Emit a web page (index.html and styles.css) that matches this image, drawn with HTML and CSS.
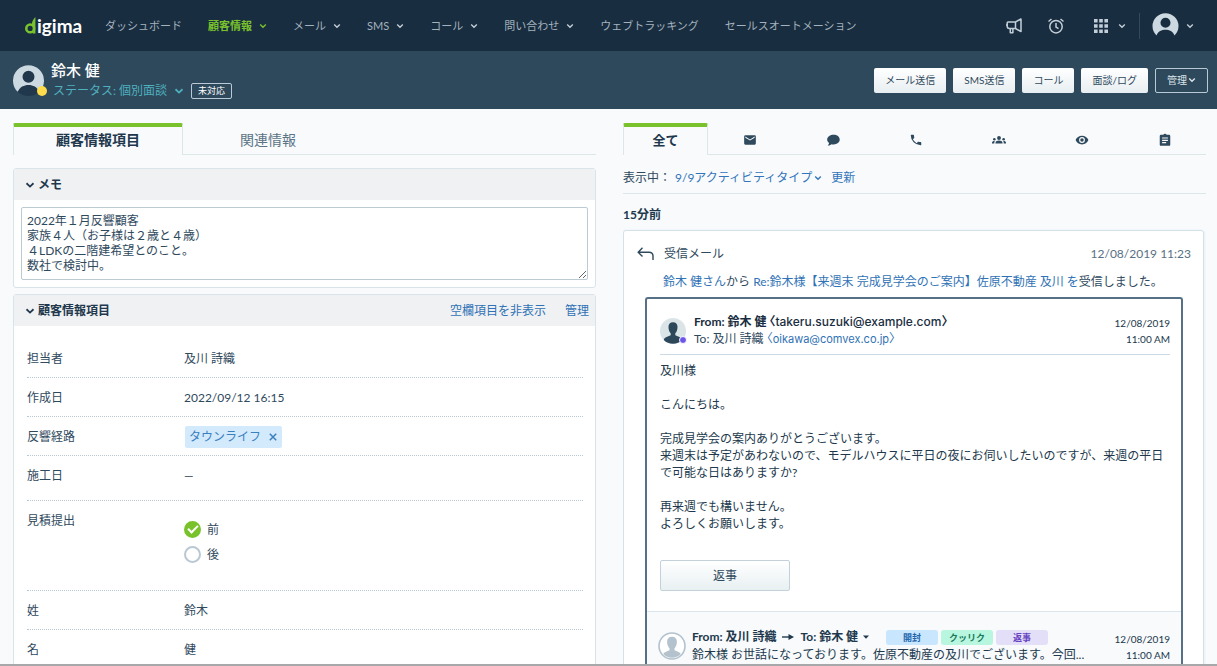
FILE: index.html
```html
<!DOCTYPE html>
<html lang="ja">
<head>
<meta charset="utf-8">
<meta name="viewport" content="width=device-width, initial-scale=1">
<title>鈴木 健 | digima</title>
<link rel="stylesheet" href="styles.css">
</head>
<body class="app">
<svg class="defs" aria-hidden="true">
  <symbol id="chev" viewBox="0 0 8 8"><path d="M1.2 2.6 4 5.3l2.8-2.7" fill="none" stroke="currentColor" stroke-width="1.4"/></symbol>
  <symbol id="person" viewBox="0 0 30 30"><path fill="currentColor" fill-rule="evenodd" d="M4.6 26A15 15 0 1 1 25.4 26C23.5 21.3 19.5 19.4 15 19.4S6.500 21.300 4.600 26ZM15 5.500a5.800 5.800 0 1 0 0 11.600 5.800 5.800 0 0 0 0-11.600Z"/></symbol>
</svg>

<header class="topbar">
  <a class="logo" href="#" aria-label="digima">
    <svg class="logo-mark" viewBox="0 0 12 18" aria-hidden="true"><circle cx="5.200" cy="11.400" r="3.900" fill="none" stroke="#79c22c" stroke-width="2.600"/><path d="M10.400 0v16.500H7.800V9.500C6 7 7.300 3 10.400 0Z" fill="#79c22c"/></svg>
    <span>igima</span>
  </a>
  <nav class="nav">
    <a href="#">ダッシュボード</a>
    <a href="#" class="current">顧客情報<svg class="chev"><use href="#chev"/></svg></a>
    <a href="#">メール<svg class="chev"><use href="#chev"/></svg></a>
    <a href="#">SMS<svg class="chev"><use href="#chev"/></svg></a>
    <a href="#">コール<svg class="chev"><use href="#chev"/></svg></a>
    <a href="#">問い合わせ<svg class="chev"><use href="#chev"/></svg></a>
    <a href="#">ウェブトラッキング</a>
    <a href="#">セールスオートメーション</a>
  </nav>
  <div class="tools">
    <button class="tool" aria-label="お知らせ"><svg width="18" height="18" viewBox="0 0 18 18" fill="none" stroke="currentColor" stroke-width="1.500" stroke-linejoin="round"><path d="M10.500 5 16 2v12.500l-5.500-3M10.500 5v6.500H4.300a2.200 2.200 0 0 1-2.100-2.200V5.800c0-.5.300-.8.800-.8ZM5.300 11.500v4.300h2.600v-4.300M1 8h2"/></svg></button>
    <button class="tool" aria-label="アラーム"><svg width="18" height="18" viewBox="0 0 18 18" fill="none" stroke="currentColor" stroke-width="1.500"><circle cx="9" cy="9.700" r="6.200"/><path d="M9 6v4l2.500 1.700M1.500 4.500 4.500 2M16.500 4.500l-3-2.500"/></svg></button>
    <button class="tool apps" aria-label="アプリ"><svg width="14" height="14" viewBox="0 0 14 14" fill="currentColor"><path d="M0 0h3.600v3.600H0zM5.200 0h3.600v3.600H5.200zM10.400 0H14v3.600h-3.600zM0 5.200h3.600v3.600H0zM5.200 5.200h3.600v3.600H5.200zM10.400 5.200H14v3.600h-3.600zM0 10.400h3.600V14H0zM5.200 10.400h3.600V14H5.200zM10.400 10.400H14V14h-3.600z"/></svg><svg class="chev"><use href="#chev"/></svg></button>
    <button class="tool account" aria-label="アカウント"><svg class="account-face"><use href="#person"/></svg><svg class="chev"><use href="#chev"/></svg></button>
  </div>
</header>

<section class="customer">
  <div class="customer-avatar"><svg class="customer-face"><use href="#person"/></svg><i class="presence"></i></div>
  <div class="customer-info">
    <h1>鈴木 健</h1>
    <div class="status-line">
      <button class="status">ステータス: 個別面談<svg class="chev-lg" viewBox="0 0 8 8"><use href="#chev"/></svg></button>
      <span class="pill">未対応</span>
    </div>
  </div>
  <div class="actions">
    <button class="btn">メール送信</button>
    <button class="btn">SMS送信</button>
    <button class="btn">コール</button>
    <button class="btn">面談/ログ</button>
    <button class="btn outline">管理<svg class="chev"><use href="#chev"/></svg></button>
  </div>
</section>

<main class="columns">
  <section class="column">
    <div class="tabs left-tabs" role="tablist">
      <button class="tab active" role="tab" aria-selected="true">顧客情報項目</button>
      <button class="tab" role="tab" aria-selected="false">関連情報</button>
    </div>

    <section class="panel">
      <div class="panel-head"><h2><svg class="chev-head"><use href="#chev"/></svg><label for="memo">メモ</label></h2></div>
      <div class="memo-body"><textarea id="memo" rows="4">2022年１月反響顧客
家族４人（お子様は２歳と４歳）
４LDKの二階建希望とのこと。
数社で検討中。</textarea></div>
    </section>

    <section class="panel">
      <div class="panel-head">
        <h2><svg class="chev-head"><use href="#chev"/></svg>顧客情報項目</h2>
        <div class="panel-links"><a href="#">空欄項目を非表示</a><a href="#">管理</a></div>
      </div>
      <dl class="fields">
        <div class="field"><dt>担当者</dt><dd>及川 詩織</dd></div>
        <div class="field"><dt>作成日</dt><dd>2022/09/12 16:15</dd></div>
        <div class="field"><dt>反響経路</dt><dd><span class="tag">タウンライフ<button aria-label="削除"><svg width="8" height="8" viewBox="0 0 8 8"><path d="m.8.8 6.400 6.400M7.200.8.8 7.200" stroke="currentColor" stroke-width="1.500"/></svg></button></span></dd></div>
        <div class="field date-row"><dt>施工日</dt><dd>—</dd></div>
        <div class="field choice-row"><dt>見積提出</dt><dd class="choices">
          <label><input type="radio" name="estimate" checked>前</label>
          <label><input type="radio" name="estimate">後</label>
        </dd></div>
        <div class="field"><dt>姓</dt><dd>鈴木</dd></div>
        <div class="field"><dt>名</dt><dd>健</dd></div>
      </dl>
    </section>
  </section>

  <section class="column">
    <div class="tabs right-tabs" role="tablist">
      <button class="tab active" role="tab" aria-selected="true">全て</button>
      <button class="tab" role="tab" aria-label="メール"><svg viewBox="0 0 24 24"><path d="M20 4H4a2 2 0 0 0-2 2v12a2 2 0 0 0 2 2h16a2 2 0 0 0 2-2V6a2 2 0 0 0-2-2Zm0 4-8 5-8-5V6l8 5 8-5Z"/></svg></button>
      <button class="tab" role="tab" aria-label="SMS"><svg viewBox="0 0 24 24"><path d="M13 3C7 3 2 6.600 2 11.200c0 2.500 1.300 4.500 3.300 6-.2 1.800-.9 3-2.300 4.300 2.800 0 5-1 6.400-2.400 1.100.3 2.300.4 3.600.4 6 0 10.500-3.600 10.500-8.300S19 3 13 3Z"/></svg></button>
      <button class="tab" role="tab" aria-label="コール"><svg viewBox="0 0 24 24"><path d="M6.600 10.800a15 15 0 0 0 6.600 6.600l2.200-2.200a1 1 0 0 1 1-.25 11.400 11.400 0 0 0 3.600.57 1 1 0 0 1 1 1V20a1 1 0 0 1-1 1A17 17 0 0 1 3 4a1 1 0 0 1 1-1h3.500a1 1 0 0 1 1 1c0 1.250.2 2.450.57 3.570a1 1 0 0 1-.25 1Z"/></svg></button>
      <button class="tab" role="tab" aria-label="面談"><svg viewBox="0 0 24 24"><circle cx="12" cy="8.500" r="3.300"/><circle cx="4" cy="10.700" r="2.200"/><circle cx="20" cy="10.700" r="2.200"/><path d="M6 18v-1.700c0-2 3-3.300 6-3.300s6 1.300 6 3.300V18ZM0 18v-1.600c0-1.500 1.600-2.600 4.800-2.500-.5.700-.8 1.500-.8 2.400V18ZM24 18v-1.600c0-1.500-1.600-2.600-4.800-2.500.5.700.8 1.500.8 2.400V18Z"/></svg></button>
      <button class="tab" role="tab" aria-label="閲覧"><svg viewBox="0 0 24 24"><path fill-rule="evenodd" d="M12 4.500C7 4.500 2.700 7.600 1 12c1.700 4.400 6 7.500 11 7.500s9.300-3.100 11-7.500c-1.700-4.400-6-7.500-11-7.500ZM12 17a5 5 0 1 1 0-10 5 5 0 0 1 0 10Zm0-8a3 3 0 1 0 0 6 3 3 0 0 0 0-6Z"/></svg></button>
      <button class="tab" role="tab" aria-label="ログ"><svg viewBox="0 0 24 24"><path fill-rule="evenodd" d="M19 3h-4.200a3 3 0 0 0-5.600 0H5a2 2 0 0 0-2 2v15a2 2 0 0 0 2 2h14a2 2 0 0 0 2-2V5a2 2 0 0 0-2-2Zm-5 14.500H7v-2h7Zm3-4H7v-2h10Zm0-4H7v-2h10Z"/></svg></button>
    </div>

    <div class="filter"><span>表示中：</span><button class="link">9/9アクティビティタイプ<svg class="chev"><use href="#chev"/></svg></button><button class="link">更新</button></div>
    <h3 class="ago">15分前</h3>

    <article class="card">
      <header class="card-head">
        <svg class="reply-icon" viewBox="0 0 17 15" fill="none" stroke="currentColor" stroke-width="1.400"><path d="M5.500.8 1.200 5.200l4.300 4.400M1.500 5.200H12c2.800 0 4 1.600 4 4V13"/></svg>
        <span>受信メール</span>
        <time class="card-time">12/08/2019 11:23</time>
      </header>
      <p class="summary"><a href="#">鈴木 健さん</a>から <a href="#">Re:鈴木様【来週末 完成見学会のご案内】佐原不動産 及川 を</a>受信しました。</p>

      <div class="mail">
        <div class="mail-main">
          <div class="mail-head">
            <div class="sender">
              <svg viewBox="0 0 26 26"><circle cx="13" cy="13" r="13" fill="#dbe5e8"/><path fill="#2d475b" d="M13 4.300c-3 0-4.600 1.900-4.500 4.700.1 3.300 1 5 2.200 6.300v2L6 19.300c-1.200.5-1.900 1.300-2.200 2.700a13 13 0 0 0 18.400 0c-.3-1.400-1-2.200-2.200-2.700l-4.700-2v-2c1.200-1.300 2.100-3 2.200-6.300.1-2.800-1.500-4.700-4.500-4.700Z"/></svg>
              <i class="sender-dot"></i>
            </div>
            <div class="addresses">
              <div class="from">From: 鈴木 健 〈<span class="address">takeru.suzuki@example.com</span>〉</div>
              <div>To: 及川 詩織 <a href="#">〈<span class="address">oikawa@comvex.co.jp</span>〉</a></div>
            </div>
            <time class="stamp">12/08/2019<br>11:00 AM</time>
          </div>
          <div class="mail-text">
            <p>及川様</p>
            <p>こんにちは。</p>
            <p>完成見学会の案内ありがとうございます。<br>来週末は予定があわないので、モデルハウスに平日の夜にお伺いしたいのですが、来週の平日で可能な日はありますか?</p>
            <p>再来週でも構いません。<br>よろしくお願いします。</p>
          </div>
          <button class="reply">返事</button>
        </div>
        <div class="mail-prev">
          <svg class="prev-face" viewBox="0 0 28 28"><circle cx="14" cy="14" r="13" fill="#fff" stroke="#b3c2cd" stroke-width="1.600"/><path fill="#b3c2cd" d="M14 4.800c-3.400 0-5 2.200-4.900 5.200.1 3 1.200 5 2.400 6.200v2L7 20.200c-.8.4-1.400 1-1.700 1.800a11.800 11.800 0 0 0 17.400 0c-.3-.8-.9-1.400-1.700-1.800l-4.500-2v-2c1.200-1.200 2.300-3.200 2.400-6.200.1-3-1.500-5.200-4.900-5.200Z"/></svg>
          <div class="prev-info">
            <div class="prev-line"><b>From: 及川 詩織</b><svg width="14" height="8" viewBox="0 0 14 8"><path d="M1 4h8" stroke="currentColor" stroke-width="1.400"/><path d="M7.500 1 13 4 7.500 7Z" fill="currentColor"/></svg><b>To: 鈴木 健</b><svg width="6" height="4" viewBox="0 0 6 4"><path d="M0 .5h6L3 3.800Z" fill="currentColor"/></svg>
              <span class="badges"><span class="badge opened">開封</span><span class="badge clicked">クッリク</span><span class="badge replied">返事</span></span></div>
            <div class="excerpt">鈴木様 お世話になっております。佐原不動産の及川でございます。今回...</div>
          </div>
          <time class="stamp">12/08/2019<br>11:00 AM</time>
        </div>
      </div>
    </article>
  </section>
</main>
</body>
</html>
```

FILE: styles.css
```css
* { box-sizing: border-box; }
h1, h2, h3, p, dl, dd { margin: 0; }
a { color: #2f72b5; text-decoration: none; }
button { font: inherit; color: inherit; margin: 0; padding: 0; border: 0; background: none; cursor: pointer; }
svg { flex: none; }
.defs { position: absolute; width: 0; height: 0; }

.app {
  margin: 0;
  height: 100vh;
  display: flex;
  flex-direction: column;
  overflow: hidden;
  border-bottom: 2px solid #a6a8aa;
  background: #f8fafc;
  color: #2f495d;
  font: 12px/16px Lato, "Noto Sans CJK JP", sans-serif;
}
.chev { width: 8px; height: 8px; }

/* top navigation */
.topbar {
  flex: none;
  height: 51px;
  display: flex;
  align-items: center;
  padding: 0 23px 0 25px;
  background: #192d40;
  color: #c3cfd8;
  font-size: 11px;
}
.logo { display: flex; align-items: center; width: 80px; color: #fff; font-size: 19px; font-weight: 700; line-height: 24px; }
.logo-mark { width: 12px; height: 18px; }
.nav { display: flex; gap: 26px; white-space: nowrap; }
.nav a { display: flex; align-items: center; gap: 7px; color: #a4b2be; }
.nav .chev { color: #c3cfd8; }
.nav .current, .nav .current .chev { color: #79c22c; font-weight: 700; }
.tools { display: flex; align-items: center; margin-left: auto; }
.tool { display: flex; align-items: center; margin-right: 24px; }
.apps { gap: 10px; margin: 0 13px 0 5px; }
.account { gap: 7px; margin: 0; padding-left: 12px; border-left: 1px solid #34495b; }
.account-face { width: 27px; height: 26px; color: #cdd9e1; }

/* customer bar */
.customer {
  flex: none;
  height: 58px;
  display: flex;
  align-items: center;
  gap: 7px;
  padding: 0 9px 0 13px;
  background: #2e495c;
  color: #fff;
}
.customer-avatar { position: relative; width: 31px; height: 31px; border-radius: 50%; background: #21384c; }
.customer-face { display: block; width: 31px; height: 31px; color: #cdd9e1; }
.presence { position: absolute; right: -3px; bottom: 0; width: 10px; height: 10px; border-radius: 50%; background: #fddb4a; }
.customer h1 { font-size: 15px; line-height: 21px; font-weight: 500; }
.status-line { display: flex; align-items: center; gap: 7px; padding-left: 2px; line-height: 20px; }
.status { display: flex; align-items: center; gap: 7px; color: #4fb0be; }
.chev-lg { width: 10px; height: 10px; }
.pill { padding: 0 6px; border: 1px solid #b9cad6; border-radius: 2px; font-size: 9px; line-height: 14px; }
.actions { display: flex; gap: 7px; margin-left: auto; }
.btn {
  height: 25px;
  padding: 0 11px;
  border-radius: 2px;
  background: linear-gradient(#fff, #e8eef1);
  color: #2f495d;
  font-size: 10px;
  white-space: nowrap;
}
.btn.outline { display: flex; align-items: center; gap: 1px; border: 1px solid #b9cad6; background: none; color: #dbe4ea; }

/* two columns */
.columns {
  flex: 1;
  min-height: 0;
  display: grid;
  grid-template-columns: minmax(0, 1fr) minmax(0, 1fr);
  gap: 27px;
  padding: 14px 11px 0 13px;
}
.column { min-height: 0; overflow-y: auto; scrollbar-width: none; }
.tabs { display: flex; height: 32px; border-bottom: 1px solid #dce7ea; }
.tab { display: flex; align-items: center; justify-content: center; font-size: 13px; color: #5b7486; padding-top: 3px; }
.left-tabs .tab { width: 170px; font-size: 14px; }
.right-tabs .tab { flex: 1; }
.tabs .active {
  height: 32px;
  padding: 0 0 2px;
  border: 1px solid #dce7ea;
  border-top: 4px solid #79c22c;
  border-bottom: 0;
  border-radius: 2px 2px 0 0;
  background: #f8fafc;
  color: #21384c;
  font-weight: 700;
}
.tab svg { width: 14px; height: 14px; fill: #2f495d; }

.panel { margin-top: 6px; border: 1px solid #d9e3ea; border-radius: 3px; background: #fff; }
.tabs + .panel { margin-top: 13px; }
.panel-head { display: flex; align-items: center; justify-content: space-between; height: 31px; padding: 0 6px 0 11px; background: #f0f1f3; }
.panel-head h2 { display: flex; align-items: center; gap: 3px; font-size: 12px; font-weight: 700; color: #21384c; }
.chev-head { width: 10px; height: 10px; }
.panel-links { display: flex; gap: 19px; }
.memo-body { padding: 7px; }
.memo-body textarea {
  display: block;
  width: 100%;
  height: 73px;
  padding: 5px;
  border: 1px solid #bccad4;
  border-radius: 2px;
  background: #fff;
  color: #2f495d;
  font: inherit;
  line-height: 15px;
  resize: both;
  overflow: hidden;
}
.fields { padding: 13px 12px 0 13px; }
.field { display: flex; min-height: 39px; padding: 12px 0 10px; border-bottom: 1px dotted #b9c8d3; }
.field dt { width: 157px; flex: none; }
.date-row { min-height: 45px; }
.choice-row { min-height: 90px; }
.choices { display: flex; flex-direction: column; gap: 8px; padding-top: 8px; }
.choices label { display: flex; align-items: center; gap: 6px; height: 17px; }
.choices input {
  appearance: none;
  width: 17px;
  height: 17px;
  margin: 0;
  display: grid;
  place-items: center;
  border: 2px solid #b9c8d3;
  border-radius: 50%;
  background: #fff;
}
.choices input:checked { border-color: #79c22c; background: #79c22c; }
.choices input:checked::before {
  content: "";
  width: 8px;
  height: 4px;
  margin-bottom: 3px;
  border: solid #fff;
  border-width: 0 0 2px 2px;
  transform: rotate(-45deg);
}
.tag { display: inline-flex; align-items: center; gap: 8px; height: 22px; margin: -3px 0 -3px 1px; padding: 0 5px 0 4px; border-radius: 2px; background: #d2eafc; color: #3b7fbe; }
.tag button { display: flex; }

/* activity feed */
.filter { display: flex; align-items: center; height: 39px; padding-top: 7px; border-bottom: 1px solid #dce7ea; }
.link { display: flex; align-items: center; gap: 2px; color: #3275ba; margin-right: 9px; }
.filter span { margin-right: 4px; }
.ago { margin: 13px 0 7px; font-size: 12px; line-height: 16px; font-weight: 700; color: #21384c; }
.card { margin-right: 2px; padding: 15px 20px 0 21px; border: 1px solid #d5e1ea; border-radius: 3px; background: #fff; box-shadow: 0 1px 3px #dbe5ec; }
.card-head { display: flex; align-items: center; gap: 10px; margin: 0 -8px; }
.reply-icon { width: 17px; height: 15px; }
.card-time { margin-left: auto; color: #587083; }
.summary { margin: 12px 0 7px 18px; }
.mail { border: 2px solid #567085; border-radius: 3px; }
.mail-main { padding: 14px 11px 20px 13px; }
.mail-head { display: flex; align-items: center; gap: 8px; padding-bottom: 6px; border-bottom: 1px solid #ccdae5; }
.sender { position: relative; width: 26px; height: 26px; }
.sender svg { display: block; width: 26px; height: 26px; }
.sender-dot { position: absolute; right: -1px; bottom: 0; width: 8px; height: 8px; border: 1px solid #fff; border-radius: 50%; background: #6d55ea; }
.addresses { line-height: 17px; white-space: nowrap; }
.from { color: #192d40; font-weight: 700; }
.address { font-family: Inter, sans-serif; font-size: 11px; font-weight: 400; }
.from .address { font-size: 12px; font-weight: 500; }
.from, .addresses a { font-feature-settings: "halt"; }
.stamp { margin-left: auto; font-size: 10px; line-height: 16px; text-align: right; white-space: nowrap; color: #21384c; }
.mail-text { padding: 7px 0 0; line-height: 17px; color: #21384c; }
.mail-text p { margin-bottom: 17px; }
.reply { width: 130px; height: 31px; margin-top: 11px; border: 1px solid #c5d1da; border-radius: 2px; background: linear-gradient(#fff, #e8f0f2); }
.mail-prev { display: flex; gap: 6px; padding: 16px 11px 10px; border-top: 1px solid #dbe5ed; background: #f8fafc; }
.prev-face { width: 28px; height: 28px; margin-top: 4px; }
.prev-info { min-width: 0; color: #21384c; line-height: 18px; }
.prev-line { display: flex; align-items: center; gap: 5px; white-space: nowrap; }
.badges { display: flex; gap: 3px; margin-left: 12px; }
.badge { width: 52px; border-radius: 3px; font-size: 9px; line-height: 15px; font-weight: 700; text-align: center; }
.opened { background: #c8e6fd; color: #2567ac; }
.clicked { background: #b9f6df; color: #17795a; }
.replied { background: #e3dff8; color: #6842c2; }
.excerpt { overflow: hidden; white-space: nowrap; text-overflow: ellipsis; }
.mail-prev .stamp { padding-top: 3px; }
```
